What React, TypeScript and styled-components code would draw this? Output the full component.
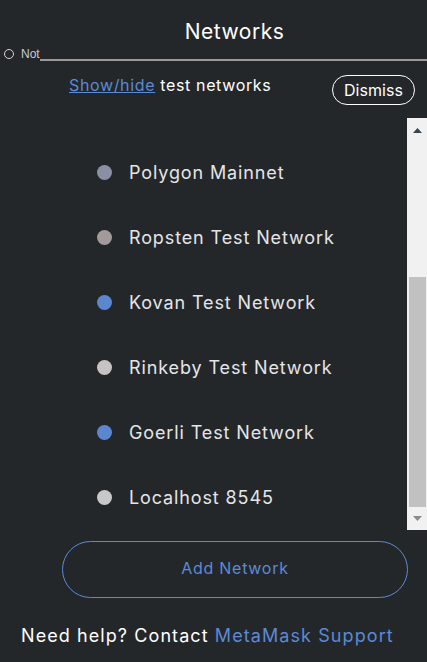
import React from "react";
import styled, { createGlobalStyle } from "styled-components";

const Global = createGlobalStyle`
  html, body { margin: 0; padding: 0; background: #24272a; }
  body { font-family: "Inter", "Liberation Sans", sans-serif; color: #fff; letter-spacing: 0.055em; }
`;

const Page = styled.div`
  width: 427px;
  height: 662px;
  background: #24272a;
  display: flex;
  flex-direction: column;
  overflow: hidden;
`;

const Title = styled.div`
  padding: 20px 0 0 42px;
  height: 44px;
  box-sizing: border-box;
  text-align: center;
  font-size: 21px;
  line-height: 24px;
  letter-spacing: 0.025em;
  color: #fff;
`;

const StatusRow = styled.div`
  display: flex;
  align-items: center;
  height: 17px;
  padding-left: 4px;
`;

const Ring = styled.span`
  width: 8px;
  height: 8px;
  border: 1px solid #d6d6d6;
  border-radius: 50%;
  margin: 3px 7px 0 0;
`;

const NotText = styled.span`
  font-size: 12px;
  letter-spacing: 0;
  color: #c9cbd3;
  font-family: "Liberation Sans", sans-serif;
  margin-top: 3px;
`;

const Rule = styled.div`
  flex: 1;
  height: 2px;
  background: #9b9898;
  align-self: flex-end;
`;

const ToggleRow = styled.div`
  display: flex;
  align-items: flex-start;
  padding: 14px 12px 0 69px;
  height: 44px;
  box-sizing: border-box;
`;

const ToggleText = styled.span`
  font-size: 16px;
  line-height: 20px;
  letter-spacing: 0.04em;
  flex: 1;
`;

const Link = styled.a`
  color: #5b8ad6;
  text-decoration: underline;
`;

const Dismiss = styled.button`
  background: transparent;
  color: #fff;
  border: 1px solid #fff;
  border-radius: 16px;
  font-family: inherit;
  font-size: 16px;
  letter-spacing: 0.005em;
  height: 30px;
  width: 83px;
  padding: 0;
`;

const Scroller = styled.div`
  margin-top: 13px;
  height: 412px;
  display: flex;
`;

const List = styled.div`
  flex: 1;
  display: flex;
  flex-direction: column;
  padding-top: 22px;
`;

const Item = styled.div`
  height: 65px;
  display: flex;
  align-items: center;
  padding-left: 97px;
  gap: 17px;
  font-size: 18px;
  color: #e4e5e7;
`;

const Dot = styled.span<{ $c: string }>`
  width: 15px;
  height: 15px;
  border-radius: 50%;
  background: ${(p) => p.$c};
  flex-shrink: 0;
`;

const Bar = styled.div`
  width: 20px;
  background: #f1f1f1;
  display: flex;
  flex-direction: column;
`;

const Arrow = styled.div<{ $h: number }>`
  height: ${(p) => p.$h}px;
  display: flex;
  align-items: center;
  justify-content: center;
`;

const Track = styled.div`
  flex: 1;
  display: flex;
  flex-direction: column;
  justify-content: flex-end;
  padding: 0 1px 0 2px;
`;

const Thumb = styled.div`
  height: 230px;
  background: #c1c1c1;
`;

const AddButton = styled.button`
  margin: 11px 19px 0 62px;
  height: 57px;
  padding: 0 0 3px;
  border-radius: 29px;
  border: 1px solid #5b8ad6;
  background: transparent;
  color: #5b8ad6;
  font-family: inherit;
  font-size: 16px;
  letter-spacing: 0.045em;
`;

const Footer = styled.div`
  margin-top: 27px;
  padding-left: 21px;
  font-size: 18px;
  line-height: 22px;
  letter-spacing: 0.06em;
  white-space: nowrap;
  color: #fff;
`;

const Blue = styled.span`
  color: #5b8ad6;
`;

const networks = [
  { name: "Polygon Mainnet", color: "#8b8fa6" },
  { name: "Ropsten Test Network", color: "#a39a9c" },
  { name: "Kovan Test Network", color: "#5a87cf" },
  { name: "Rinkeby Test Network", color: "#c7c3c3" },
  { name: "Goerli Test Network", color: "#5a87cf" },
  { name: "Localhost 8545", color: "#c8c8c8" },
];

export default function App() {
  return (
    <Page>
      <Global />
      <Title>Networks</Title>
      <StatusRow>
        <Ring />
        <NotText>Not</NotText>
        <Rule />
      </StatusRow>
      <ToggleRow>
        <ToggleText>
          <Link>Show/hide</Link> test networks
        </ToggleText>
        <Dismiss>Dismiss</Dismiss>
      </ToggleRow>
      <Scroller>
        <List>
          {networks.map((n) => (
            <Item key={n.name}>
              <Dot $c={n.color} />
              {n.name}
            </Item>
          ))}
        </List>
        <Bar>
          <Arrow $h={24}>
            <svg width="9" height="5" viewBox="0 0 9 5">
              <polygon points="0,5 9,5 4.5,0" fill="#3b4250" />
            </svg>
          </Arrow>
          <Track>
            <Thumb />
          </Track>
          <Arrow $h={23}>
            <svg width="9" height="5" viewBox="0 0 9 5">
              <polygon points="0,0 9,0 4.5,5" fill="#8a8a90" />
            </svg>
          </Arrow>
        </Bar>
      </Scroller>
      <AddButton>Add Network</AddButton>
      <Footer>
        Need help? Contact <Blue>MetaMask Support</Blue>
      </Footer>
    </Page>
  );
}
